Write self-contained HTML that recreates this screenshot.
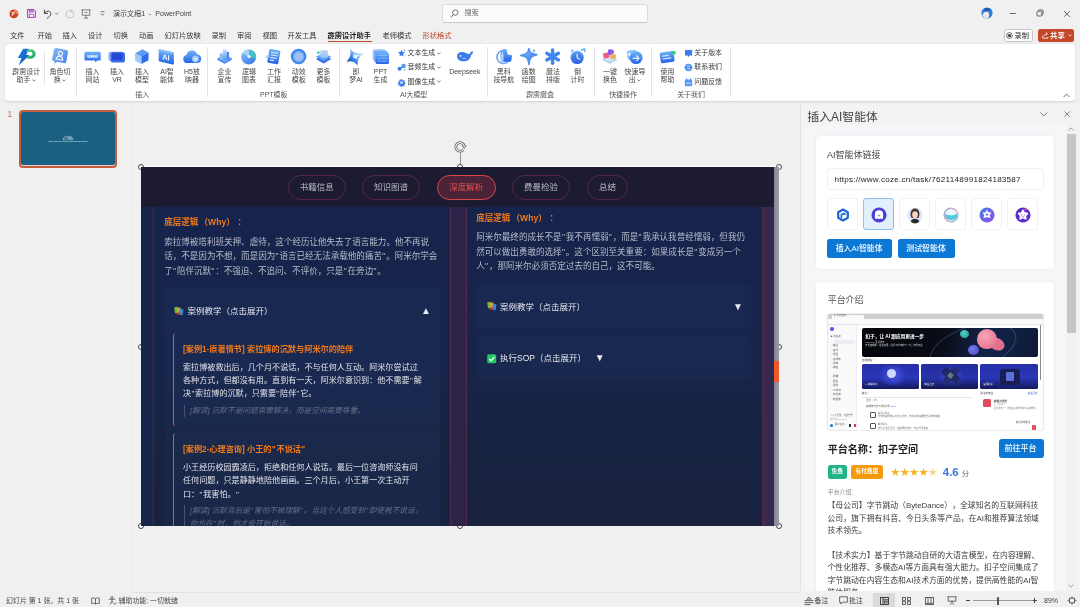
<!DOCTYPE html>
<html lang="zh-CN"><head><meta charset="utf-8"><title>演示文稿1 - PowerPoint</title>
<style>
*{box-sizing:border-box;margin:0;padding:0}
html,body{width:1080px;height:607px;overflow:hidden;background:#f0f0f0}
body{position:relative;filter:blur(.3px);text-spacing-trim:space-all;font-family:"Liberation Sans","Noto Sans CJK SC",sans-serif;color:#333;font-size:7px;-webkit-font-smoothing:antialiased}
.abs{position:absolute}
.t{position:absolute;white-space:nowrap;line-height:1}
svg{position:absolute;overflow:visible}
/* title / tabs */
.tab{position:absolute;top:31.5px;font-size:7.25px;line-height:8px;color:#333;white-space:nowrap}
/* ribbon */
#ribbon{position:absolute;left:5px;top:44px;width:1070px;height:57px;background:#fff;border-radius:4px;box-shadow:0 0.5px 2px rgba(0,0,0,.12)}
.rb{position:absolute;width:40px;text-align:center;font-size:6.950px;line-height:8.700px;color:#444;top:67.600px;white-space:nowrap}
.gl{position:absolute;width:60px;text-align:center;font-size:6.950px;line-height:8px;color:#555;top:90.5px;white-space:nowrap}
.sep{position:absolute;width:1px;background:#e3e3e3;top:47px;height:50px}
.sb{position:absolute;font-size:6.950px;line-height:8px;color:#3a3a3a;white-space:nowrap}
.ic{position:absolute;width:17.200px;height:17.200px;top:48px}
/* slide */
#slide{position:absolute;left:141px;top:167px;width:633px;height:359px;background:#2b2146;overflow:hidden;font-family:"Liberation Sans","Noto Sans CJK SC",sans-serif}
#slide .nav{position:absolute;left:0;top:0;width:633px;height:40px;background:#1c1b31}
.pill{position:absolute;top:8px;height:24.500px;border:0.800px solid #582741;border-radius:12.500px;color:#b9bac4;font-size:8.500px;line-height:22.500px;text-align:center;white-space:nowrap}
.pill.on{border-color:#d8454b;background:#4b2338;color:#e9524c}
.card{position:absolute;background:linear-gradient(180deg,#16244d 0,#17244a 45%,#182341 75%,#18223f 100%);border:0.800px solid #4f2b4c}
.h{position:absolute;font-size:8.550px;font-weight:700;color:#ef7a1c;white-space:nowrap;line-height:10px}
.p{position:absolute;font-size:8.550px;color:#b9bdca;line-height:14.400px;white-space:nowrap}
.box{position:absolute;background:rgba(70,105,185,.055);border-radius:3px}
.bt{position:absolute;font-size:8.500px;color:#e6e7ee;white-space:nowrap;line-height:10px}
.case{position:absolute;background:rgba(40,70,150,.04);border-left:1.600px solid #e0505c;border-radius:3px 0 0 3px}
.ct{position:absolute;font-size:8.180px;font-weight:700;color:#ef7a1c;white-space:nowrap;line-height:10px}
.cb{position:absolute;font-size:8.110px;color:#e2e3ea;white-space:nowrap;line-height:13.400px}
.cn{position:absolute;font-size:7.660px;font-style:italic;color:#666d86;white-space:nowrap;line-height:11.600px;border-left:0.800px solid #4a5270;padding-left:5.500px}
.hd{position:absolute;width:6px;height:6px;border-radius:50%;background:#fff;border:0.900px solid #444}
/* right pane */
#pane{position:absolute;left:799.500px;top:104px;width:280.500px;height:487.200px;background:#f3f3f3;border-left:0.800px solid #e3e3e3;overflow:hidden}
#web{position:absolute;left:4px;top:20.500px;width:272.500px;height:467.500px;background:#f5f6f8;overflow:hidden}
.wcard{position:absolute;left:11.800px;width:238.200px;background:#fff;border-radius:4px;box-shadow:0 0 0 .6px #ececef}
.ib{position:absolute;top:62.500px;width:30.500px;height:31.500px;border:0.800px solid #f2f2f4;border-radius:3px;background:#fff}
.ib svg{left:6.800px;top:7.300px}
.bb{position:absolute;height:19.400px;background:#0a78d4;border-radius:2.500px;color:#fff;font-size:7.900px;line-height:20.400px;text-align:center;font-weight:500;text-indent:-1px;white-space:nowrap}
.pp{position:absolute;left:11.200px;font-size:7.850px;line-height:12.400px;color:#3c3c3c;white-space:nowrap}
/* status */
#status{position:absolute;left:0;top:591.200px;width:1080px;height:15.800px;background:#f0f0f0}
.st{position:absolute;top:596.700px;font-size:6.950px;line-height:8px;color:#444;white-space:nowrap}
.q{letter-spacing:.8px;margin-left:.3px}

</style></head>
<body>
<div id="titlebar" class="abs" style="left:0;top:0;width:1080px;height:44px;background:#f0f0f0"></div>
<!-- app logo -->
<svg style="left:8.700px;top:8.600px" width="9.800" height="9.800" viewBox="0 0 11 11"><circle cx="5.5" cy="5.5" r="5" fill="#d24625"/><path d="M5.5 .5 A5 5 0 0 1 10.5 5.5 L5.5 5.5Z" fill="#f0825a"/><circle cx="4.6" cy="5.6" r="2.9" fill="#c13b1b"/><text x="4.7" y="7.6" font-size="5.4" font-weight="700" fill="#fff" text-anchor="middle" font-family="Liberation Sans, sans-serif">P</text></svg>
<!-- save -->
<svg style="left:27px;top:9px" width="9" height="9" viewBox="0 0 9 9"><path d="M.6 .6h6.3l1.5 1.500v6.300H.6z" fill="#f1e0f6" stroke="#a03cba" stroke-width="1"/><rect x="2.300" y=".9" width="3.800" height="2.200" fill="#c78ad6" stroke="#a03cba" stroke-width=".6"/><rect x="2.400" y="5.300" width="4.200" height="2.900" fill="#fff" stroke="#a03cba" stroke-width=".7"/></svg>
<!-- undo -->
<svg style="left:43px;top:8.5px" width="17" height="10" viewBox="0 0 17 10"><path d="M1.4 .8v3.6h3.6" fill="none" stroke="#444" stroke-width="1"/><path d="M1.6 4.2C3 2 6.4 1.2 7.6 3.6 8.6 5.8 6.4 8 3.8 9.4" fill="none" stroke="#444" stroke-width="1"/><path d="M12.2 3.8l1.5 1.5 1.5-1.5" fill="none" stroke="#555" stroke-width=".8"/></svg>
<!-- redo (disabled) -->
<svg style="left:65px;top:8.5px" width="10" height="10" viewBox="0 0 10 10"><path d="M6.2 1.2C8.6 2.2 9.4 5 8 7.2 6.4 9.4 3.400 9.400 1.900 7.500 .6 5.600 1.200 3 3.200 1.600" fill="none" stroke="#b9b9b9" stroke-width=".9"/><path d="M5.400 .4v2.400h2.400" fill="none" stroke="#b9b9b9" stroke-width=".9"/></svg>
<!-- slideshow from beginning -->
<svg style="left:81px;top:8.5px" width="10" height="10" viewBox="0 0 10 10"><path d="M.4 .9h9.200M1.300 .9v5.400h7.400V.9M5 6.300v2.600M2.800 9.100h4.400" fill="none" stroke="#555" stroke-width=".75"/><path d="M3.600 3.500h2.800" stroke="#555" stroke-width=".7"/></svg>
<!-- customize -->
<svg style="left:99.500px;top:10.500px" width="5" height="6" viewBox="0 0 5 6"><path d="M.6 .6h3.800" stroke="#555" stroke-width=".7"/><path d="M.8 2.400l1.700 1.900 1.700-1.900" fill="none" stroke="#555" stroke-width=".8"/></svg>
<div class="t" style="left:113px;top:10.300px;font-size:7.050px;color:#444;letter-spacing:0">演示文稿1&nbsp; -&nbsp; PowerPoint</div>
<!-- search -->
<div class="abs" style="left:442px;top:4px;width:206px;height:18.500px;background:#fbfbfb;border:0.800px solid #dcdcdc;border-bottom-color:#c9c9c9;border-radius:3px"></div>
<svg style="left:450px;top:8.500px" width="9" height="9" viewBox="0 0 9 9"><circle cx="5.300" cy="3.600" r="2.700" fill="none" stroke="#555" stroke-width=".8"/><path d="M3.400 5.600L.7 8.400" stroke="#555" stroke-width=".9"/></svg>
<div class="t" style="left:464.500px;top:9.600px;font-size:7.100px;color:#666">搜索</div>
<!-- avatar -->
<svg style="left:981px;top:7px" width="12" height="12" viewBox="0 0 12 12"><circle cx="6" cy="6" r="5.600" fill="#2f7fd6"/><path d="M1.500 8.500C2 5 5 3.500 7 5c1.500 1.200 1.500 4 .2 6.300A5.600 5.600 0 0 1 1.500 8.500z" fill="#f3e6e6"/><path d="M3 2c2-1.800 6-1.500 7.600 1.600C9 2.800 6 3 4.400 5z" fill="#1b57b0"/></svg>
<!-- window buttons -->
<svg style="left:1009px;top:9px" width="8" height="8" viewBox="0 0 8 8"><path d="M.8 4.500h6" stroke="#444" stroke-width=".8"/></svg>
<svg style="left:1036px;top:9px" width="8" height="8" viewBox="0 0 8 8"><rect x="1" y="2.200" width="4.800" height="4.800" rx="1" fill="none" stroke="#444" stroke-width=".8"/><path d="M2.400 2V1.600c0-.4.300-.7.700-.7H6.200c.5 0 .9.400.9.900V5c0 .4-.3.700-.7.700H6" fill="none" stroke="#444" stroke-width=".8"/></svg>
<svg style="left:1063px;top:9.500px" width="8" height="8" viewBox="0 0 8 8"><path d="M1 1l5.800 5.800M6.800 1L1 6.800" stroke="#444" stroke-width=".8"/></svg>
<!-- tabs -->
<div class="tab" style="left:10px">文件</div>
<div class="tab" style="left:37.500px">开始</div>
<div class="tab" style="left:62.500px">插入</div>
<div class="tab" style="left:88px">设计</div>
<div class="tab" style="left:113.500px">切换</div>
<div class="tab" style="left:139px">动画</div>
<div class="tab" style="left:164.500px">幻灯片放映</div>
<div class="tab" style="left:211.500px">录制</div>
<div class="tab" style="left:237px">审阅</div>
<div class="tab" style="left:262.500px">视图</div>
<div class="tab" style="left:287.500px">开发工具</div>
<div class="tab" style="left:327.500px;font-weight:700;color:#222">霹雳设计助手</div>
<div class="abs" style="left:327.500px;top:41px;width:44px;height:1.200px;background:#c0492b"></div>
<div class="tab" style="left:382.500px">老师模式</div>
<div class="tab" style="left:422.500px;color:#c0492b">形状格式</div>
<!-- record / share -->
<div class="abs" style="left:1003.500px;top:28.500px;width:29.500px;height:13.800px;background:#fdfdfd;border:0.800px solid #c6c6c6;border-radius:2.500px"></div>
<svg style="left:1006px;top:32px" width="7" height="7" viewBox="0 0 7 7"><circle cx="3.500" cy="3.500" r="2.900" fill="none" stroke="#333" stroke-width=".7"/><circle cx="3.500" cy="3.500" r="1.600" fill="#333"/></svg>
<div class="t" style="left:1014.500px;top:31.700px;font-size:7.200px;color:#222">录制</div>
<div class="abs" style="left:1038px;top:28.500px;width:36px;height:13.800px;background:#c5472a;border-radius:2.500px"></div>
<svg style="left:1041.500px;top:32px" width="7" height="7" viewBox="0 0 7 7"><path d="M.8 3.600v2.600h5V4.800" fill="none" stroke="#fff" stroke-width=".8"/><path d="M2.400 4.200C2.600 2.600 3.800 1.800 5 1.800M4 .6l1.400 1.200L4 3" fill="none" stroke="#fff" stroke-width=".8"/></svg>
<div class="t" style="left:1050px;top:31.500px;font-size:7.400px;color:#fff;font-weight:700">共享</div>
<svg style="left:1067.500px;top:34px" width="4" height="3" viewBox="0 0 4 3"><path d="M.4 .5l1.600 1.600L3.600 .5" fill="none" stroke="#fff" stroke-width=".7"/></svg>
<div id="ribbon"></div>
<svg width="0" height="0" style="left:0;top:0"><defs>
<linearGradient id="gb" x1="0" y1="0" x2="0" y2="1"><stop offset="0" stop-color="#6db4f7"/><stop offset="1" stop-color="#2563e8"/></linearGradient>
<linearGradient id="gb2" x1="0" y1="0" x2="1" y2="1"><stop offset="0" stop-color="#8ac6fb"/><stop offset="1" stop-color="#2f6fe9"/></linearGradient>
<linearGradient id="gb3" x1="0" y1="0" x2="0" y2="1"><stop offset="0" stop-color="#bfe0fd"/><stop offset="1" stop-color="#5a9df3"/></linearGradient>
<linearGradient id="gg" x1="0" y1="0" x2="1" y2="1"><stop offset="0" stop-color="#5fd68a"/><stop offset="1" stop-color="#16a05a"/></linearGradient>
<linearGradient id="gt" x1="0" y1="0" x2="1" y2="0"><stop offset="0" stop-color="#4a8df0"/><stop offset="1" stop-color="#3fc7c0"/></linearGradient>
<linearGradient id="gd" x1="0" y1="0" x2="1" y2="1"><stop offset="0" stop-color="#0b1a44"/><stop offset=".6" stop-color="#1f6fe0"/><stop offset="1" stop-color="#7fd0ff"/></linearGradient>
</defs></svg>
<svg class="ic" style="left:17.6px" viewBox="0 0 16 16" width="17.200" height="17.200"><defs><linearGradient id="pl" x1="0" y1="0" x2="1" y2="1"><stop offset="0" stop-color="#1e86e6"/><stop offset="1" stop-color="#0f4fb4"/></linearGradient></defs><path d="M4.800 .6h5.400L7.600 6.400h3.200L.8 16l2.400-6.800H-.2z" fill="url(#pl)"/><path d="M9.200 1.200h2.800a4.400 4.400 0 0 1 0 8.800H8.200l1.200-2.800h2.400a1.700 1.700 0 0 0 0-3.400H8z" fill="url(#gg)"/><path d="M10 5.200l2.600-1.600-.6 2.600z" fill="#eafff2"/></svg>
<div class="rb" style="left:6.2px">霹雳设计<br>助手<svg style="position:relative;display:inline-block;vertical-align:0.5px;margin-left:1.5px" width="4" height="3" viewBox="0 0 4 3"><path d="M.4 .6l1.600 1.600L3.600 .6" fill="none" stroke="#444" stroke-width=".7"/></svg></div>
<svg class="ic" style="left:51.4px" viewBox="0 0 16 16" width="17.200" height="17.200"><defs><linearGradient id="rl" x1="0" y1="0" x2="1" y2="1"><stop offset="0" stop-color="#86b6f7"/><stop offset="1" stop-color="#3f7fe8"/></linearGradient></defs><g transform="rotate(11 8 8)"><path d="M3.600 .8h9.400a2 2 0 0 1 2 2v8.400a2 2 0 0 1-2 2H7l-2.600 2.400.2-2.400H3.600a2 2 0 0 1-2-2V2.800a2 2 0 0 1 2-2z" fill="url(#rl)"/><circle cx="8.300" cy="5" r="1.900" fill="none" stroke="#f2f8ff" stroke-width="1.100"/><path d="M5.200 10.800c.2-2.200 1.500-3 3.100-3s2.900.8 3.100 3z" fill="none" stroke="#f2f8ff" stroke-width="1.100"/></g></svg>
<div class="rb" style="left:40.0px">角色切<br>换<svg style="position:relative;display:inline-block;vertical-align:0.5px;margin-left:1.5px" width="4" height="3" viewBox="0 0 4 3"><path d="M.4 .6l1.600 1.600L3.600 .6" fill="none" stroke="#444" stroke-width=".7"/></svg></div>
<svg class="ic" style="left:83.9px" viewBox="0 0 16 16" width="17.200" height="17.200"><path d="M1.600 3.400h12.800a1.200 1.200 0 0 1 1.200 1.200v5.800a1.200 1.200 0 0 1-1.200 1.200H12l-1 1.800-1-1.800H1.600A1.200 1.200 0 0 1 .4 10.400V4.600a1.200 1.200 0 0 1 1.200-1.200z" fill="url(#gb)"/><text x="8" y="9" font-size="4.300" font-weight="700" fill="#fff" text-anchor="middle" font-family="Liberation Sans, sans-serif">www</text></svg>
<div class="rb" style="left:72.5px">插入<br>网站</div>
<svg class="ic" style="left:108.4px" viewBox="0 0 16 16" width="17.200" height="17.200"><rect x=".4" y="3.400" width="14" height="9" rx="2.200" fill="#6f9ff5" opacity=".8"/><rect x="2.400" y="3.800" width="13.400" height="9.800" rx="2.400" fill="#3a6ce8"/><rect x="3.600" y="5" width="10" height="6.400" rx="1.800" fill="#2348d4"/></svg>
<div class="rb" style="left:97.0px">插入<br>VR</div>
<svg class="ic" style="left:133.4px" viewBox="0 0 16 16" width="17.200" height="17.200"><path d="M2 5.200L8.600 1.200l5.800 3v7.200L7.800 15 2 11.800z" fill="#cfe5fd"/><path d="M2 5.200L8.600 1.200l5.800 3-6.600 3.600z" fill="#5a9cf5"/><path d="M7.800 7.800l6.600-3.600v7.200L7.800 15z" fill="#2f6ee8"/><path d="M2 5.200l5.800 2.600V15L2 11.800z" fill="#9cc8fb"/></svg>
<div class="rb" style="left:122.0px">插入<br>模型</div>
<svg class="ic" style="left:158.4px" viewBox="0 0 16 16" width="17.200" height="17.200"><path d="M1.600 1.200L14 4a1 1 0 0 1 .8 1v9.400a1 1 0 0 1-1.200 1L1.400 12.600a1 1 0 0 1-.8-1V2.200a1 1 0 0 1 1-1z" fill="url(#gb)"/><path d="M1.600 1.200L14 4a1 1 0 0 1 .8 1v1.600L.6 3.600V2.200a1 1 0 0 1 1-1z" fill="#8ec2fb" opacity=".6"/><text x="7.400" y="11.200" font-size="7" font-weight="700" fill="#f0f7ff" text-anchor="middle" font-family="Liberation Sans, sans-serif" transform="skewY(10) translate(0 -1.400)">AI</text></svg>
<div class="rb" style="left:147.0px">AI智<br>能体</div>
<svg class="ic" style="left:183.4px" viewBox="0 0 16 16" width="17.200" height="17.200"><path d="M4 14a3.800 3.800 0 0 1-.8-7.500A5.200 5.200 0 0 1 13.200 5.800a4.100 4.100 0 0 1-.6 8.200z" fill="url(#gb)"/><circle cx="11.600" cy="10.200" r="3.200" fill="#9ccbfc"/><path d="M10.700 8.600l2.700 1.600-2.700 1.600z" fill="#f0f7ff"/></svg>
<div class="rb" style="left:172.0px">H5放<br>映器</div>
<svg class="ic" style="left:215.8px" viewBox="0 0 16 16" width="17.200" height="17.200"><path d="M.8 10.600L8 7.400l7.200 3.200L8 14.600z" fill="#3b78ee"/><path d="M.8 9.600L8 6.400l7.200 3.200L8 13.600z" fill="#6aa9f8"/><rect x="6.200" y="1.400" width="3.600" height="9.600" fill="url(#gb3)"/><rect x="3.400" y="5" width="2.800" height="5.600" fill="#8bbdf9"/><rect x="9.800" y="3.600" width="2.400" height="7" fill="#4c8cf2"/></svg>
<div class="rb" style="left:204.4px">企业<br>宣传</div>
<svg class="ic" style="left:240.4px" viewBox="0 0 16 16" width="17.200" height="17.200"><circle cx="8" cy="8.400" r="7" fill="url(#gb2)"/><path d="M8 8.400L8.600 1.400A7 7 0 0 1 14.800 10z" fill="#3fc1c4"/><path d="M8 8.400L2.200 4.600A7 7 0 0 1 8.600 1.400z" fill="#a5d2fb"/><circle cx="8.400" cy="8" r="1.500" fill="#eaf4ff"/></svg>
<div class="rb" style="left:229.0px">逻辑<br>图表</div>
<svg class="ic" style="left:265.4px" viewBox="0 0 16 16" width="17.200" height="17.200"><g transform="rotate(10 8 8)"><rect x="3" y="1.400" width="10.400" height="13" rx="1.200" fill="url(#gb)"/><path d="M5 4.400h6.400M5 6.800h6.400M5 9.200h6.400M5 11.600h4" stroke="#dcecff" stroke-width="1.100"/></g><rect x="1" y="7" width="3" height="2" fill="#a5cdfb"/></svg>
<div class="rb" style="left:254.0px">工作<br>汇报</div>
<svg class="ic" style="left:290.2px" viewBox="0 0 16 16" width="17.200" height="17.200"><circle cx="8" cy="8" r="7.200" fill="#3f86f0"/><circle cx="8" cy="8" r="5.200" fill="#7db3f8"/><circle cx="8" cy="8" r="3.600" fill="#9ec0f3"/></svg>
<div class="rb" style="left:278.8px">动效<br>模板</div>
<svg class="ic" style="left:314.9px" viewBox="0 0 16 16" width="17.200" height="17.200"><path d="M.8 10.200L8 6.800l7.200 3.400L8 14.400z" fill="#2f6ee8"/><path d="M.8 8.200L8 4.800l7.200 3.400L8 12.400z" fill="#5a9cf5"/><rect x="5" y="2" width="7" height="7" rx="1" fill="#a9cdf7" opacity=".9"/><path d="M1.600 4.400h3M3.100 2.900v3" stroke="#3fc1c4" stroke-width="1"/></svg>
<div class="rb" style="left:303.5px">更多<br>模板</div>
<svg class="ic" style="left:347.4px" viewBox="0 0 16 16" width="17.200" height="17.200"><defs><linearGradient id="jm" x1="0" y1="1" x2="1" y2="0"><stop offset="0" stop-color="#0a2a7a"/><stop offset=".35" stop-color="#2a7ae8"/><stop offset=".7" stop-color="#bfe3ff"/><stop offset="1" stop-color="#f4fbff"/></linearGradient></defs><path d="M2.800 -.4C4.200 3.600 8 5.600 16.600 4.800 11.600 7.400 9.600 10.600 10 16.600 7.600 12.600 4.400 11.400 -.6 12.800 3.200 9.600 4 4.800 2.800 -.4z" fill="url(#jm)"/><path d="M6 5.600c1.600.8 3.400 1 5.600.8-1.800 1.200-2.600 2.600-2.800 4.400-.8-1.200-2-1.900-3.400-2 .7-1 .9-2 .6-3.200z" fill="#f4fbff" opacity=".9"/></svg>
<div class="rb" style="left:336.0px">即<br>梦AI</div>
<svg class="ic" style="left:371.9px" viewBox="0 0 16 16" width="17.200" height="17.200"><rect x=".6" y="1.200" width="12" height="10.400" rx="1.600" fill="#9fc8f9"/><rect x="2" y="2.600" width="12.400" height="10.800" rx="1.600" fill="#6ea8f6"/><rect x="3.400" y="4" width="12.400" height="11" rx="1.600" fill="url(#gb)"/><path d="M5 7h9.200M5 9.600h9.200M5 12.200h9.200" stroke="#8dbcf9" stroke-width=".8"/></svg>
<div class="rb" style="left:360.5px">PPT<br>生成</div>
<svg class="ic" style="left:456.2px" viewBox="0 0 16 16" width="17.200" height="17.200"><path d="M1 7.400c0-2 1.800-3.600 4.600-3.600 3 0 4.600 1.800 6.400 1.800 1 0 1.600-.8 1.400-2.200 1 .4 2 .2 2.400-.6.200 2-.6 3.200-1.800 3.600C13.600 10 11 12.400 7 12.400 3.400 12.400 1 10.400 1 7.400z" fill="#3b7bea"/><circle cx="4.200" cy="7.400" r=".8" fill="#fff"/><path d="M6 9.200c1 .8 2.400.8 3.400.2" stroke="#cfe3ff" stroke-width=".7" fill="none"/></svg>
<div class="rb" style="left:444.8px">Deepseek<br></div>
<svg class="ic" style="left:495.2px" viewBox="0 0 16 16" width="17.200" height="17.200"><path d="M7.600 2.400A6 6 0 1 0 13.600 10 4.800 4.800 0 0 1 7.600 2.400z" fill="none" stroke="#6aa6f6" stroke-width="1.600"/><path d="M7.400 1h3.200l1.400 5.200h2.200a1.600 1.600 0 0 1 1.600 1.800l-.6 3.600a1.600 1.600 0 0 1-1.600 1.200H7.400z" fill="url(#gb)"/><rect x="5" y="6" width="3" height="7" rx=".8" fill="#a9cdf7"/></svg>
<div class="rb" style="left:483.8px">黑科<br>技导航</div>
<svg class="ic" style="left:520.2px" viewBox="0 0 16 16" width="17.200" height="17.200"><path d="M8.400 .4c.4 3.400 1.400 5 7.400 5.800C9.800 7.400 8.800 9.400 8.400 15.600 7.600 9.400 6.600 7.800 .6 7 6.600 5.800 7.600 4 8.400 .4z" fill="url(#gb2)" stroke="#4f8ff2" stroke-width="1.400" stroke-linejoin="round"/><circle cx="13" cy="2.600" r="1.300" fill="#7fb4f8"/></svg>
<div class="rb" style="left:508.8px">函数<br>绘图</div>
<svg class="ic" style="left:544.4px" viewBox="0 0 16 16" width="17.200" height="17.200"><g stroke="#3f86f0" stroke-width="3.200" stroke-linecap="round"><path d="M8 1.800v12.400"/><path d="M2.600 4.900l10.800 6.200"/><path d="M13.400 4.900L2.600 11.100"/></g></svg>
<div class="rb" style="left:533.0px">魔法<br>排版</div>
<svg class="ic" style="left:568.9px" viewBox="0 0 16 16" width="17.200" height="17.200"><circle cx="7.600" cy="8.800" r="6.200" fill="url(#gb)"/><circle cx="7.600" cy="8.800" r="4.400" fill="#2a56d8" opacity=".35"/><path d="M7.600 5.400v3.600l2.600 1.600" stroke="#eaf4ff" stroke-width="1.100" fill="none"/><path d="M11 2.200l3.200-1.200 1 2.600" stroke="#4fb0e8" stroke-width="1.400" fill="none"/><path d="M2 3.400l2-1.600" stroke="#6aa6f6" stroke-width="1.400"/></svg>
<div class="rb" style="left:557.5px">倒<br>计时</div>
<svg class="ic" style="left:601.4px" viewBox="0 0 16 16" width="17.200" height="17.200"><path d="M.8 11L8 8l7.200 3L8 14.600z" fill="#a9cdf7"/><path d="M.8 9.600L8 6.600l7.200 3L8 13.200z" fill="#cfe3fb"/><rect x="2.200" y="4.400" width="5.200" height="5" rx="1" fill="#e8607a" transform="rotate(-12 5 7)"/><rect x="6.400" y="1.400" width="5.400" height="5.400" rx="1.200" fill="#8a5be8" transform="rotate(8 9 4)"/><rect x="8.800" y="5.600" width="5" height="4.600" rx="1" fill="#f0b05a" transform="rotate(14 11 8)"/></svg>
<div class="rb" style="left:590.0px">一键<br>换色</div>
<svg class="ic" style="left:626.4px" viewBox="0 0 16 16" width="17.200" height="17.200"><rect x="1" y="2" width="9" height="9" rx="2" fill="#8fc3fb" transform="rotate(-8 5 6)"/><circle cx="9.400" cy="9" r="6" fill="url(#gb)"/><path d="M6.200 9.600h5.600M9.600 7l2.400 2.600-2.400 2.600" stroke="#eaf4ff" stroke-width="1.100" fill="none"/><path d="M3 4.400v3M1.600 6h2.800" stroke="#fff" stroke-width=".8"/></svg>
<div class="rb" style="left:615.0px">快速导<br>出<svg style="position:relative;display:inline-block;vertical-align:0.5px;margin-left:1.5px" width="4" height="3" viewBox="0 0 4 3"><path d="M.4 .6l1.600 1.600L3.600 .6" fill="none" stroke="#444" stroke-width=".7"/></svg></div>
<svg class="ic" style="left:658.9px" viewBox="0 0 16 16" width="17.200" height="17.200"><g transform="rotate(-8 8 8)"><rect x="1" y="3.400" width="13" height="10" rx="1.600" fill="url(#gb)"/><path d="M3.200 7h6M3.200 9.600h8" stroke="#dcecff" stroke-width="1.100"/></g><circle cx="13.600" cy="4.600" r="2" fill="#37c98a"/></svg>
<div class="rb" style="left:647.5px">使用<br>帮助</div>
<div class="sep" style="left:44.2px;top:50.5px;height:33px"></div>
<div class="sep" style="left:76.2px"></div>
<div class="sep" style="left:207.2px"></div>
<div class="sep" style="left:339.3px"></div>
<div class="sep" style="left:487.0px"></div>
<div class="sep" style="left:593.6px"></div>
<div class="sep" style="left:651.2px"></div>
<div class="sep" style="left:730.3px"></div>
<div class="gl" style="left:112.3px">插入</div>
<div class="gl" style="left:243.8px">PPT模板</div>
<div class="gl" style="left:383.6px">AI大模型</div>
<div class="gl" style="left:510.0px">霹雳魔盒</div>
<div class="gl" style="left:593.0px">快捷操作</div>
<div class="gl" style="left:661.0px">关于我们</div>
<svg style="left:397.2px;top:48.7px" width="9" height="9" viewBox="0 0 9 9"><path d="M4.500 .6l1 2.400 2.600.3-2 1.700.6 2.600L4.500 6.200 2.300 7.600l.6-2.600-2-1.700 2.600-.3z" fill="#3b7bea"/><circle cx="7.400" cy="1.400" r="1" fill="#7fb4f8"/></svg>
<div class="sb" style="left:407.5px;top:49.0px">文本生成<svg style="position:relative;display:inline-block;vertical-align:0.5px;margin-left:1.5px" width="4" height="3" viewBox="0 0 4 3"><path d="M.4 .6l1.600 1.600L3.600 .6" fill="none" stroke="#444" stroke-width=".7"/></svg></div>
<svg style="left:397.2px;top:63.1px" width="9" height="9" viewBox="0 0 9 9"><circle cx="2.600" cy="5.800" r="2" fill="#3b7bea"/><circle cx="6.600" cy="3" r="2.200" fill="#5a9cf5"/><path d="M2.600 5.800L6.600 3" stroke="#3b7bea" stroke-width="1"/><circle cx="7.600" cy="7" r="1" fill="#8fc3fb"/></svg>
<div class="sb" style="left:407.5px;top:63.4px">音频生成<svg style="position:relative;display:inline-block;vertical-align:0.5px;margin-left:1.5px" width="4" height="3" viewBox="0 0 4 3"><path d="M.4 .6l1.600 1.600L3.600 .6" fill="none" stroke="#444" stroke-width=".7"/></svg></div>
<svg style="left:397.2px;top:77.5px" width="9" height="9" viewBox="0 0 9 9"><path d="M4.500 .8l1.200 1.600 2-.2-.2 2 1.400 1.200-1.600 1 .2 2-2-.4-1.400 1.400-1-1.800-2-.2.600-1.800L.5 4.200l1.800-.8.200-2 1.200.4z" fill="#3b7bea"/><circle cx="4.500" cy="4.600" r="1.400" fill="#cfe3ff"/></svg>
<div class="sb" style="left:407.5px;top:77.8px">图像生成<svg style="position:relative;display:inline-block;vertical-align:0.5px;margin-left:1.5px" width="4" height="3" viewBox="0 0 4 3"><path d="M.4 .6l1.600 1.600L3.600 .6" fill="none" stroke="#444" stroke-width=".7"/></svg></div>
<svg style="left:684.0px;top:48.7px" width="9" height="9" viewBox="0 0 9 9"><path d="M1 1h7v5.400H5.400L4 8.200 3.600 6.400H1z" fill="#3b7bea"/><path d="M6 .4h2.600V3" fill="#7fb4f8"/></svg>
<div class="sb" style="left:694.3px;top:49.0px">关于版本</div>
<svg style="left:684.0px;top:63.1px" width="9" height="9" viewBox="0 0 9 9"><circle cx="4.500" cy="4.500" r="3.800" fill="#5a9cf5"/><circle cx="4.500" cy="4.500" r="1.600" fill="#cfe3ff"/><path d="M.7 4.500h7.600" stroke="#3b7bea" stroke-width=".8"/></svg>
<div class="sb" style="left:694.3px;top:63.4px">联系我们</div>
<svg style="left:684.0px;top:77.5px" width="9" height="9" viewBox="0 0 9 9"><rect x=".8" y="1.600" width="7.400" height="6.600" rx="1.200" fill="#5a9cf5"/><path d="M2.600 .6v2M6.400 .6v2" stroke="#3b7bea" stroke-width="1"/><path d="M2.400 5.200h4.200" stroke="#dcecff" stroke-width="1"/></svg>
<div class="sb" style="left:694.3px;top:77.8px">问题反馈</div>
<svg style="left:1062.5px;top:92.5px" width="7" height="5" viewBox="0 0 7 5"><path d="M.6 4l2.900-2.900L6.400 4" fill="none" stroke="#444" stroke-width=".8"/></svg>
<!-- thumbnail pane -->
<div class="abs" style="left:129.300px;top:104px;width:1px;height:488px;background:#fafafa"></div>
<div class="abs" style="left:130.300px;top:104px;width:.6px;height:487px;background:#e8e8e8"></div>
<div class="t" style="left:7.600px;top:109.800px;font-size:8.400px;color:#cd7450">1</div>
<div class="abs" style="left:19px;top:110px;width:98.200px;height:57.600px;border:2px solid #c45e3f;border-radius:3.800px;background:#e9cfc4"></div>
<div class="abs" style="left:21.400px;top:112.300px;width:93.400px;height:53px;border-radius:2px;background:#1a6082"></div>
<div class="t" style="left:21.400px;top:136px;width:93.400px;text-align:center;font-size:1.800px;line-height:2.200px;color:#dfeef5;white-space:normal">扣子空间<br>插入AI智能体<br>https://www.coze.cn/task/7621148991824183587</div>
<!-- selection handles (behind the web view) -->
<div class="abs" style="left:141px;top:165.900px;width:638.500px;height:1.200px;background:#fff;opacity:.9"></div>
<div class="abs" style="left:459.900px;top:152.500px;width:.8px;height:12px;background:#909090"></div>
<svg style="left:454.400px;top:141px" width="13" height="12" viewBox="0 0 13 12"><path d="M9.300 8.800A4.300 4.300 0 1 1 10.300 5.200" fill="none" stroke="#555" stroke-width="2.600" stroke-linecap="butt"/><path d="M7.600 4.600h5.200L10.300 8z" fill="#555"/><path d="M9.300 8.800A4.300 4.300 0 1 1 10.300 5.200" fill="none" stroke="#fff" stroke-width="1.100"/><path d="M9 5.200h2.600L10.300 7z" fill="#fff"/></svg>
<div class="hd" style="left:138px;top:163.600px"></div>
<div class="hd" style="left:457.300px;top:163.600px"></div>
<div class="hd" style="left:776.300px;top:163.600px"></div>
<div class="hd" style="left:138px;top:343.500px"></div>
<div class="hd" style="left:776.300px;top:343.500px"></div>
<div class="hd" style="left:138px;top:523px"></div>
<div class="hd" style="left:457.300px;top:523px"></div>
<div class="hd" style="left:776.300px;top:523px"></div>
<!-- slide workspace -->
<div id="slide">
  <div class="abs" style="left:0;top:40px;width:633px;height:319px;background:linear-gradient(90deg,#18254b 0,#18254b 11px,#2a2147 11.500px,#2e2248 310px,#2b2147 633px)"></div>
  <div class="nav"></div>
  <div class="pill" style="left:147px;width:57.500px">书籍信息</div>
  <div class="pill" style="left:221px;width:58px">知识图谱</div>
  <div class="pill on" style="left:296px;width:58.500px">深度解析</div>
  <div class="pill" style="left:371px;width:58px">费曼检验</div>
  <div class="pill" style="left:446px;width:41px">总结</div>
  <!-- left card -->
  <div class="card" style="left:11.500px;top:40px;width:298.500px;height:330px;border-top:none;border-left-color:#3d2a4e"></div>
  <div class="h" style="left:23.200px;top:49.600px">底层逻辑<span style="margin:0 1.2px">（Why）</span><span style="margin-left:1.6px">：</span></div>
  <div class="p" style="left:23.200px;top:67.700px">索拉博被塔利班关押、虐待，这个经历让他失去了语言能力。他不再说<br>话，不是因为不想，而是因为<span class="q">"</span>语言已经无法承载他的痛苦<span class="q">"</span>。阿米尔学会<br>了<span class="q">"</span>陪伴沉默<span class="q">"</span>：不强迫、不追问、不评价，只是<span class="q">"</span>在旁边<span class="q">"</span>。</div>
  <div class="box" style="left:23.500px;top:120px;width:275px;height:250px"></div>
  <svg style="left:33px;top:138.500px" width="10" height="10" viewBox="0 0 10 10"><rect x=".6" y="1" width="3.400" height="6" fill="#5fc23a" transform="rotate(-8 2 4)"/><rect x="3" y="1.600" width="3.400" height="6.400" fill="#e0a030" transform="rotate(4 5 5)"/><rect x="5.400" y="3" width="3.600" height="6" fill="#3a8be0" transform="rotate(10 7 6)"/><rect x="2.400" y="6.600" width="4" height="2" fill="#c0392b"/></svg>
  <div class="bt" style="left:46.400px;top:139px">案例教学（点击展开）</div>
  <div class="bt" style="left:280px;top:139px;font-size:10px">▲</div>
  <!-- case 1 -->
  <div class="case" style="left:31.700px;top:165.800px;width:266.300px;height:93px"></div>
  <div class="ct" style="left:42px;top:178.200px">[案例1-原著情节] 索拉博的沉默与阿米尔的陪伴</div>
  <div class="cb" style="left:42px;top:193.600px">索拉博被救出后，几个月不说话，不与任何人互动。阿米尔尝试过<br>各种方式，但都没有用。直到有一天，阿米尔意识到：他不需要<span class="q">"</span>解<br>决<span class="q">"</span>索拉博的沉默，只需要<span class="q">"</span>陪伴<span class="q">"</span>它。</div>
  <div class="cn" style="left:42.500px;top:238.200px">[解读] 沉默不是问题需要解决，而是空间需要尊重。</div>
  <!-- case 2 -->
  <div class="case" style="left:31.700px;top:266px;width:266.300px;height:100px"></div>
  <div class="ct" style="left:42px;top:277.800px">[案例2-心理咨询] 小王的<span class="q">"</span>不说话<span class="q">"</span></div>
  <div class="cb" style="left:42px;top:293.900px">小王经历校园霸凌后，拒绝和任何人说话。最后一位咨询师没有问<br>任何问题，只是静静地陪他画画。三个月后，小王第一次主动开<br>口：<span class="q">"</span>我害怕。<span class="q">"</span></div>
  <div class="cn" style="left:42.500px;top:337.800px;line-height:12.700px">[解读] 沉默背后是<span class="q">"</span>害怕不被理解<span class="q">"</span>。当这个人感受到<span class="q">"</span>即使我不说话，<br>你也在<span class="q">"</span>时，他才会开始说话。</div>
  <!-- right card -->
  <div class="card" style="left:324.500px;top:40px;width:297px;height:330px;border-top:none"></div>
  <div class="h" style="left:335.200px;top:45.800px">底层逻辑<span style="margin:0 1.2px">（Why）</span><span style="margin-left:1.6px">：</span></div>
  <div class="p" style="left:335.200px;top:63.400px">阿米尔最终的成长不是<span class="q">"</span>我不再懦弱<span class="q">"</span>，而是<span class="q">"</span>我承认我曾经懦弱，但我仍<br>然可以做出勇敢的选择<span class="q">"</span>。这个区别至关重要：如果成长是<span class="q">"</span>变成另一个<br>人<span class="q">"</span>，那阿米尔必须否定过去的自己，这不可能。</div>
  <div class="box" style="left:335.800px;top:118px;width:274px;height:43.500px"></div>
  <svg style="left:345.500px;top:134px" width="10" height="10" viewBox="0 0 10 10"><rect x=".6" y="1" width="3.400" height="6" fill="#5fc23a" transform="rotate(-8 2 4)"/><rect x="3" y="1.600" width="3.400" height="6.400" fill="#e0a030" transform="rotate(4 5 5)"/><rect x="5.400" y="3" width="3.600" height="6" fill="#3a8be0" transform="rotate(10 7 6)"/><rect x="2.400" y="6.600" width="4" height="2" fill="#c0392b"/></svg>
  <div class="bt" style="left:359px;top:134.600px">案例教学（点击展开）</div>
  <div class="bt" style="left:592px;top:134.600px;font-size:10px">▼</div>
  <div class="box" style="left:335.800px;top:169px;width:274px;height:43.800px"></div>
  <svg style="left:345.600px;top:186.500px" width="9.400" height="9.400" viewBox="0 0 10 10"><rect x=".2" y=".2" width="9.600" height="9.600" rx="1.600" fill="#1fc864"/><path d="M2.300 5.200l2 2 3.600-4" fill="none" stroke="#fff" stroke-width="1.300"/></svg>
  <div class="bt" style="left:359px;top:186px">执行SOP（点击展开）</div>
  <div class="bt" style="left:453.800px;top:186px;font-size:10px">▼</div>
  <!-- inner scrollbar of the right column -->
  <div class="abs" style="left:621.500px;top:40px;width:11.500px;height:319px;background:linear-gradient(90deg,#3e2a4b 0,#37294c 5px,#33294f 100%)"></div>
</div>
<!-- web page scrollbar strip + thumb -->
<div class="abs" style="left:773.600px;top:167px;width:5.800px;height:359px;background:linear-gradient(90deg,#858597,#9a9aa8)"></div>
<div class="abs" style="left:773.600px;top:361px;width:5.800px;height:20.500px;background:#ea5a2a"></div>
<div id="pane">
  <div class="t" style="left:6.800px;top:7.700px;font-size:11.900px;color:#424242">插入AI智能体</div>
  <svg style="left:239.500px;top:8px" width="7.600" height="4.750" viewBox="0 0 8 5"><path d="M.4 .5l3.600 3.600L7.600 .5" fill="none" stroke="#555" stroke-width=".8"/></svg>
  <svg style="left:263.500px;top:7.200px" width="6.300" height="6.300" viewBox="0 0 7 7"><path d="M.5 .5l6 6M6.500 .5l-6 6" stroke="#555" stroke-width=".8"/></svg>
  <div id="web">
    <!-- card 1 -->
    <div class="wcard" style="top:11.300px;height:133px">
      <div class="t" style="left:10.800px;top:15.100px;font-size:9px;color:#444">AI智能体链接</div>
      <div class="abs" style="left:10.800px;top:32px;width:216.500px;height:22px;border:0.800px solid #f0f0f2;border-radius:3px;background:#fff"></div>
      <div class="t" style="left:18.200px;top:39.900px;font-size:8.100px;color:#222;letter-spacing:.24px">https://www.coze.cn/task/7621148991824183587</div>
      <div class="ib" style="left:10.800px"><svg width="16" height="16" viewBox="0 0 14 14"><path d="M7 2.200l4.200 2.400v4.800L7 11.800 2.800 9.400V4.600z" fill="none" stroke="#1b63d8" stroke-width="1.900" stroke-linejoin="round"/><path d="M5.600 9.600V6.800l2-1.200 1.800 1" fill="none" stroke="#1b63d8" stroke-width="1.400"/></svg></div>
      <div class="ib" style="left:46.600px;background:#e2f0fd;border-color:#8cbfee;width:31.500px"><svg width="16" height="16" viewBox="0 0 14 14"><circle cx="7" cy="7" r="6.600" fill="#4b3fd8"/><path d="M3.400 9.800V6.400a3.600 3.600 0 0 1 7.200 0v3.400l-1.200.9-1.200-.9-1.200.9-1.200-.9-1.200.9z" fill="#fff"/><path d="M5.800 7l1.200 1 1.200-1" fill="none" stroke="#4b3fd8" stroke-width=".7"/></svg></div>
      <div class="ib" style="left:83px"><svg width="16" height="16" viewBox="0 0 14 14"><circle cx="7" cy="7" r="6.600" fill="#d9e6fb"/><path d="M3.200 7.400C2.800 3.600 4.600 1.400 7 1.400s4.200 2.200 3.800 6l-.8 2.200H4z" fill="#4a2f28"/><ellipse cx="7" cy="6.800" rx="2.500" ry="3" fill="#f6d7c6"/><path d="M3.200 13c.4-2 2-2.800 3.800-2.800s3.400.8 3.800 2.800A6.600 6.600 0 0 1 3.200 13z" fill="#2a2a2a"/></svg></div>
      <div class="ib" style="left:119px"><svg width="16" height="16" viewBox="0 0 14 14"><defs><linearGradient id="q1" x1="0" y1="0" x2="1" y2="1"><stop offset="0" stop-color="#7aa8f8"/><stop offset=".5" stop-color="#f7a6b8"/><stop offset="1" stop-color="#4fd0e0"/></linearGradient></defs><circle cx="7" cy="7" r="6" fill="#e9fafc" stroke="url(#q1)" stroke-width="1.300"/><path d="M1.800 5.400c1.600 2.400 8.800 2.400 10.400 0v3.400c-.8 3.400-9.600 3.400-10.400 0z" fill="#56c9e0"/></svg></div>
      <div class="ib" style="left:155px"><svg width="16" height="16" viewBox="0 0 14 14"><defs><linearGradient id="q2" x1="0" y1="0" x2="1" y2="1"><stop offset="0" stop-color="#3f7df0"/><stop offset="1" stop-color="#9a4be8"/></linearGradient></defs><circle cx="7" cy="7" r="6.600" fill="url(#q2)"/><path d="M7 2.400l1.300 2.300 2.700.3-1.700 2 .8 2.700L7 8.900l-3.100.8.800-2.700-1.700-2 2.700-.3z" fill="#fff"/><path d="M5.600 6h2.800L7 8.200z" fill="#6a5be8"/></svg></div>
      <div class="ib" style="left:190.800px"><svg width="16" height="16" viewBox="0 0 14 14"><circle cx="7" cy="7" r="6.600" fill="#5a2bd0"/><path d="M7 2.600l1.400 2.500 2.800.5-1.900 2.100.4 2.900L7 9.400l-2.700 1.200.4-2.900L2.800 5.600l2.800-.5z" fill="#fff" stroke="#fff" stroke-width="1" stroke-linejoin="round"/><circle cx="9.400" cy="2" r="1" fill="#f06a5a"/><path d="M5.900 6.600v.8M8.100 6.600v.8" stroke="#5a2bd0" stroke-width=".7"/><path d="M6 8.300c.6.500 1.400.5 2 0" stroke="#5a2bd0" stroke-width=".5" fill="none"/></svg></div>
      <div class="bb" style="left:10.800px;top:103px;width:65.200px">插入AI智能体</div>
      <div class="bb" style="left:81.500px;top:103px;width:57.500px">测试智能体</div>
    </div>
    <!-- card 2 -->
    <div class="wcard" style="top:157px;height:420px">
      <div class="t" style="left:11.500px;top:14.200px;font-size:8.900px;color:#555">平台介绍</div>
      <!-- screenshot -->
      <div class="abs" style="left:11.500px;top:32.300px;width:215.300px;height:116.200px;background:#fff;border-radius:2px;overflow:hidden;box-shadow:0 0 0 .6px #d8d8dc">
        <div class="abs" style="left:0;top:0;width:216px;height:5.400px;background:#cfcfd2"></div>
        <div class="abs" style="left:4.500px;top:.8px;width:32px;height:4.700px;background:#f9f9fb;border-radius:1px 1px 0 0"></div><div class="t" style="left:6px;top:1.600px;font-size:2.600px;color:#555">● 扣子空间</div>
        <div class="abs" style="left:0;top:5.400px;width:216px;height:5.600px;background:#fbfbfc;border-bottom:.5px solid #e6e6ea"></div>
        <div class="abs" style="left:0;top:11px;width:29.500px;height:106px;background:#fafafc;border-right:.5px solid #eeeef2"></div>
        <div class="abs" style="left:2px;top:13px;width:4.500px;height:4.500px;border-radius:50%;background:#5a4be8"></div>
        <div class="t" style="left:3px;top:21.500px;font-size:2.600px;line-height:4.450px;color:#555;white-space:normal;width:24px">■ 新任务<br>&nbsp;<br>□ 首页<br>□ 空间<br>□ 项目<br>□ 资源库<br>□ 发布<br>□ 模板<br>&nbsp;<br>□ 收藏<br>□ 团队<br>□ 插件<br>□ 工作流<br>□ 知识库<br>□ 数据库</div>
        <div class="abs" style="left:6px;top:26.500px;width:21px;height:4px;background:#ededf2"></div>
        <div class="abs" style="left:34px;top:14px;width:176px;height:29px;border-radius:2px;overflow:hidden;background:linear-gradient(100deg,#05060a 0,#0a0c16 45%,#13244a 70%,#0e1a36 100%)"><div class="abs" style="left:66px;top:-2px;width:90px;height:44px;border-radius:50%;border:.5px solid rgba(120,150,220,.3);transform:rotate(-18deg)"></div></div>
        <div class="t" style="left:37.500px;top:21px;font-size:4.800px;color:#fff;font-weight:700;letter-spacing:-.1px">扣子，让 AI 跟应用更进一步</div>
        <div class="t" style="left:37.500px;top:27.200px;font-size:2.300px;line-height:3.300px;color:#d5d8e2">Coze 2.0 全新发布<br>开发智能体、搭建应用、运行工作流的下一代AI开发平台</div>
        <div class="abs" style="left:132.500px;top:16.500px;width:8.500px;height:8px;border-radius:50%;background:radial-gradient(circle at 40% 35%,#4fd0c0,#1f8f88)"></div>
        <div class="abs" style="left:140px;top:31px;width:11.500px;height:10px;border-radius:50%;background:radial-gradient(circle at 40% 35%,#7a7af0,#4444b8)"></div>
        <div class="abs" style="left:160px;top:24px;width:17px;height:12px;border-radius:50%;background:#e0708c;transform:rotate(25deg)"></div><div class="abs" style="left:149.500px;top:15px;width:20px;height:20px;border-radius:50% 50% 45% 45%;background:radial-gradient(circle at 40% 35%,#f8a6b8,#e06684)"></div>
        <div class="t" style="left:34px;top:45.800px;font-size:2.600px;color:#444">应用模板 ›</div>
        <div class="abs" style="left:34px;top:50px;width:57.500px;height:25.500px;border-radius:1.500px;background:linear-gradient(180deg,#2530a8 0,#2a36b8 55%,#141a5c 100%)"></div>
        <div class="abs" style="left:93.500px;top:50px;width:57px;height:25.500px;border-radius:1.500px;background:linear-gradient(180deg,#232c9c 0,#2833ac 55%,#12174f 100%)"></div>
        <div class="abs" style="left:152.500px;top:50px;width:57.500px;height:25.500px;border-radius:1.500px;background:linear-gradient(180deg,#2530a8 0,#2a36b8 55%,#141a5c 100%)"></div>
        <div class="abs" style="left:52px;top:52px;width:26px;height:20px;background:radial-gradient(ellipse at 50% 45%,#4a58e0 0,#3340c8 45%,rgba(42,54,184,0) 75%)"></div><div class="abs" style="left:59px;top:55px;width:9px;height:9px;border-radius:50%;background:#dfe6ff;opacity:.9"></div>
        <div class="abs" style="left:110px;top:52px;width:26px;height:20px;background:radial-gradient(ellipse at 50% 50%,#3f4cd0 0,rgba(42,54,184,0) 75%)"></div><div class="abs" style="left:119px;top:52.500px;width:8px;height:19px;border-radius:1.500px;background:#262d78;transform:rotate(38deg)"></div><div class="abs" style="left:119px;top:52.500px;width:8px;height:19px;border-radius:1.500px;background:#20276a;transform:rotate(-52deg)"></div><div class="abs" style="left:120.500px;top:59.500px;width:5px;height:5px;background:#5f7a72;transform:rotate(38deg)"></div>
        <div class="abs" style="left:172px;top:55px;width:20px;height:16px;border-radius:3px;background:#1a1f52"></div>
        <div class="abs" style="left:178px;top:58px;width:8px;height:9px;border-radius:1px;background:#5a70e0"></div>
        <div class="t" style="left:37px;top:70.500px;font-size:2.400px;color:#e8e9f5">AI 编程助手</div>
        <div class="t" style="left:96.500px;top:70.500px;font-size:2.400px;color:#e8e9f5">商品上架</div>
        <div class="t" style="left:155.500px;top:70.500px;font-size:2.400px;color:#e8e9f5">客服助手</div>
        <div class="t" style="left:34px;top:79px;font-size:2.600px;color:#444">最近 ›</div>
        <div class="abs" style="left:34px;top:83.500px;width:110px;height:.5px;background:#e6e6ea"></div>
        <div class="t" style="left:38px;top:86px;font-size:2.400px;color:#777">全部 ｜ 我</div>
        <div class="t" style="left:37px;top:92px;font-size:2.400px;color:#666">▪ 智能体开发与调试示例 <span style="color:#4a6cf0">Beta</span></div>
        <div class="abs" style="left:42px;top:98px;width:6.500px;height:6px;border:.8px solid #555;border-radius:1px"></div>
        <div class="t" style="left:50px;top:98px;font-size:2.400px;line-height:3.300px;color:#777">资讯小助手<br>帮你收集整理每日行业新闻，自动生成摘要推送到你的邮箱</div>
        <div class="abs" style="left:42px;top:109.500px;width:6.500px;height:6px;border:.8px solid #555;border-radius:1px"></div>
        <div class="t" style="left:50px;top:109.500px;font-size:2.400px;line-height:3.300px;color:#777">翻译助手<br>支持多语言互译，保留原文格式，专业术语准确</div>
        <div class="t" style="left:152.500px;top:79px;font-size:2.600px;color:#444">关注的博主</div>
        <div class="t" style="left:200px;top:79px;font-size:2.400px;color:#4a6cf0">查看全部</div>
        <div class="abs" style="left:155px;top:85.500px;width:8px;height:8px;border-radius:1.500px;background:#e04a5a"></div>
        <div class="t" style="left:166px;top:86px;font-size:2.600px;line-height:3.500px;color:#444"><b>智能小助理</b><br><span style="color:#999;font-size:2.200px">@ 官方账号</span><br><span style="color:#888;font-size:2.200px">全新发布了一款超级好用的效率工具智能体</span></div>
        <div class="t" style="left:188px;top:108px;font-size:2.400px;color:#555">最近发布更新</div>
        <div class="abs" style="left:204.500px;top:111.500px;width:4px;height:4.500px;background:#e25562"></div>
        <div class="t" style="left:2.500px;top:100.500px;font-size:2.200px;line-height:3.200px;color:#666">个人免费版&nbsp;&nbsp;&nbsp;&nbsp;升级套餐<br><span style="color:#aaa">资源点 500/1000</span></div>
        <div class="abs" style="left:2.500px;top:110px;width:3px;height:3px;border-radius:50%;background:#2f6fe0"></div>
        <div class="t" style="left:7px;top:110.500px;font-size:2.400px;color:#666">用户名称 ›</div>
        <div class="abs" style="left:21px;top:110.500px;width:2px;height:2.500px;background:#333"></div>
        <div class="abs" style="left:26px;top:110px;width:2px;height:3px;background:#e0304a"></div>
        <div class="abs" style="left:212.500px;top:11px;width:.8px;height:55px;background:#8a8a90"></div>
      </div>
      <div class="t" style="left:11.400px;top:163.700px;font-size:10.050px;font-weight:700;color:#222">平台名称：扣子空间</div>
      <div class="bb" style="left:182.300px;top:157.600px;width:45px;font-size:8px;border-radius:3px">前往平台</div>
      <div class="abs" style="left:11.300px;top:183px;width:19.200px;height:14.800px;border-radius:2.500px;background:#1fb386;color:#fff;font-size:5.600px;font-weight:700;line-height:13px;text-align:center">免费</div>
      <div class="abs" style="left:34.600px;top:183px;width:31.800px;height:14.800px;border-radius:2.500px;background:#f5990f;color:#fff;font-size:5.600px;font-weight:700;line-height:13px;text-align:center">有付费版</div>
      <div class="t" style="left:74.500px;top:186.600px;font-size:9.200px;letter-spacing:.2px;color:#f5b21f">★★★★<span style="color:#f6d68c">★</span></div>
      <div class="t" style="left:126.500px;top:185.400px;font-size:11.400px;font-weight:700;color:#3a76e2">4.6</div>
      <div class="t" style="left:145.500px;top:188.800px;font-size:7.400px;color:#666">分</div>
      <div class="t" style="left:11.500px;top:208.300px;font-size:5.900px;color:#888">平台介绍：</div>
      <div class="pp" style="top:218.700px">【母公司】字节跳动（ByteDance），全球知名的互联网科技<br>公司，旗下拥有抖音、今日头条等产品，在AI和推荐算法领域<br>技术领先。<br>&nbsp;<br>【技术实力】基于字节跳动自研的大语言模型，在内容理解、<br>个性化推荐、多模态AI等方面具有强大能力。扣子空间集成了<br>字节跳动在内容生态和AI技术方面的优势，提供高性能的AI智<br>能体服务。</div>
    </div>
  </div>
  <!-- scrollbar -->
  <div class="abs" style="left:265.800px;top:20.500px;width:11px;height:467.500px;background:#f1f1f1"></div>
  <div class="abs" style="left:266.400px;top:30.200px;width:9.100px;height:198.500px;background:#c6c6c6"></div>
  <svg style="left:267.700px;top:23px" width="6" height="4" viewBox="0 0 6 4"><path d="M.6 3.300l2.400-2.400 2.400 2.400" fill="none" stroke="#8a8a8a" stroke-width=".8"/></svg>
  <svg style="left:267.700px;top:480px" width="6" height="4" viewBox="0 0 6 4"><path d="M.6 .7l2.400 2.400L5.400 .7" fill="none" stroke="#8a8a8a" stroke-width=".8"/></svg>
</div>
<div id="status"></div>
<div class="abs" style="left:131px;top:591.600px;width:668px;height:.7px;background:#e2e2e2"></div>
<div class="st" style="left:6px">幻灯片 第 1 张，共 1 张</div>
<svg style="left:90.500px;top:596.500px" width="9" height="8" viewBox="0 0 9 8"><path d="M4.500 1.600C3.400.8 2 .8.700 1.200v5.400c1.300-.4 2.700-.4 3.800.4 1.100-.8 2.500-.8 3.800-.4V1.200C7 .8 5.600.8 4.500 1.600zM4.500 1.600V7" fill="none" stroke="#444" stroke-width=".8"/></svg>
<svg style="left:108px;top:596px" width="9" height="9" viewBox="0 0 9 9"><circle cx="4" cy="1.500" r="1" fill="none" stroke="#444" stroke-width=".7"/><path d="M.8 3.200h6.400M4 3.200v2.400M4 5.400L2.200 8.400M4 5.400l1 1.400" fill="none" stroke="#444" stroke-width=".8"/><path d="M5.600 7.400l1 1 1.800-2" fill="none" stroke="#444" stroke-width=".8"/></svg>
<div class="st" style="left:118.500px">辅助功能: 一切就绪</div>
<!-- right side -->
<svg style="left:803.500px;top:596px" width="10" height="9" viewBox="0 0 10 9"><path d="M.5 4.600h9M.5 6.600h9M.5 8.500h6" stroke="#444" stroke-width=".8"/><path d="M2.800 3.200l2.200-2.200 2.200 2.200z" fill="none" stroke="#444" stroke-width=".7"/></svg>
<div class="st" style="left:814.500px">备注</div>
<svg style="left:838.500px;top:596px" width="9" height="9" viewBox="0 0 9 9"><path d="M.6 .8h7.800v5.400H3.600L1.800 8V6.200H.6z" fill="none" stroke="#444" stroke-width=".8"/></svg>
<div class="st" style="left:849px">批注</div>
<div class="abs" style="left:873px;top:592.500px;width:21.800px;height:14.500px;background:#dadada"></div>
<svg style="left:879.500px;top:596.500px" width="9" height="8" viewBox="0 0 9 8"><rect x=".5" y=".5" width="8" height="7" fill="none" stroke="#333" stroke-width=".9"/><path d="M3 .5v7M3 2.800h5.400" stroke="#333" stroke-width=".9"/><rect x="4.400" y="4.200" width="2.800" height="1.800" fill="none" stroke="#333" stroke-width=".7"/></svg>
<svg style="left:902px;top:596.500px" width="9" height="8" viewBox="0 0 9 8"><rect x=".5" y=".5" width="3" height="2.800" fill="none" stroke="#444" stroke-width=".8"/><rect x="5.400" y=".5" width="3" height="2.800" fill="none" stroke="#444" stroke-width=".8"/><rect x=".5" y="4.700" width="3" height="2.800" fill="none" stroke="#444" stroke-width=".8"/><rect x="5.400" y="4.700" width="3" height="2.800" fill="none" stroke="#444" stroke-width=".8"/></svg>
<svg style="left:924.500px;top:596.500px" width="9" height="8" viewBox="0 0 9 8"><rect x=".5" y=".5" width="8" height="7" fill="none" stroke="#444" stroke-width=".8"/><path d="M3 .5v7M6 .5v7" stroke="#444" stroke-width=".8"/><path d="M.5 6.300h8" stroke="#444" stroke-width=".7"/></svg>
<svg style="left:947px;top:596px" width="10" height="9" viewBox="0 0 10 9"><path d="M.4 .8h9.200M1.200 .8v4.400h7.600V.8M5 5.200v1.600M5 6.600l-2 2M5 6.600l2 2" fill="none" stroke="#444" stroke-width=".8"/></svg>
<div class="abs" style="left:965.500px;top:600.200px;width:4px;height:.8px;background:#444"></div>
<div class="abs" style="left:973px;top:600.300px;width:59.500px;height:.7px;background:#9a9a9a"></div>
<div class="abs" style="left:997.200px;top:596.500px;width:2px;height:8px;background:#555;border-radius:.5px"></div>
<div class="abs" style="left:1032.500px;top:600.200px;width:4.400px;height:.8px;background:#444"></div>
<div class="abs" style="left:1034.300px;top:598.400px;width:.8px;height:4.400px;background:#444"></div>
<div class="st" style="left:1044px;font-size:7px;top:596.500px">89%</div>
<svg style="left:1066.500px;top:596px" width="10" height="9" viewBox="0 0 10 9"><rect x="2.600" y="2.200" width="4.800" height="4.600" fill="none" stroke="#444" stroke-width=".8"/><path d="M5 .3L3.800 1.500h2.400zM5 8.700L3.800 7.500h2.400zM.4 4.500l1.200-1.200v2.400zM9.600 4.500L8.400 3.300v2.400z" fill="#444"/></svg>

</body></html>
